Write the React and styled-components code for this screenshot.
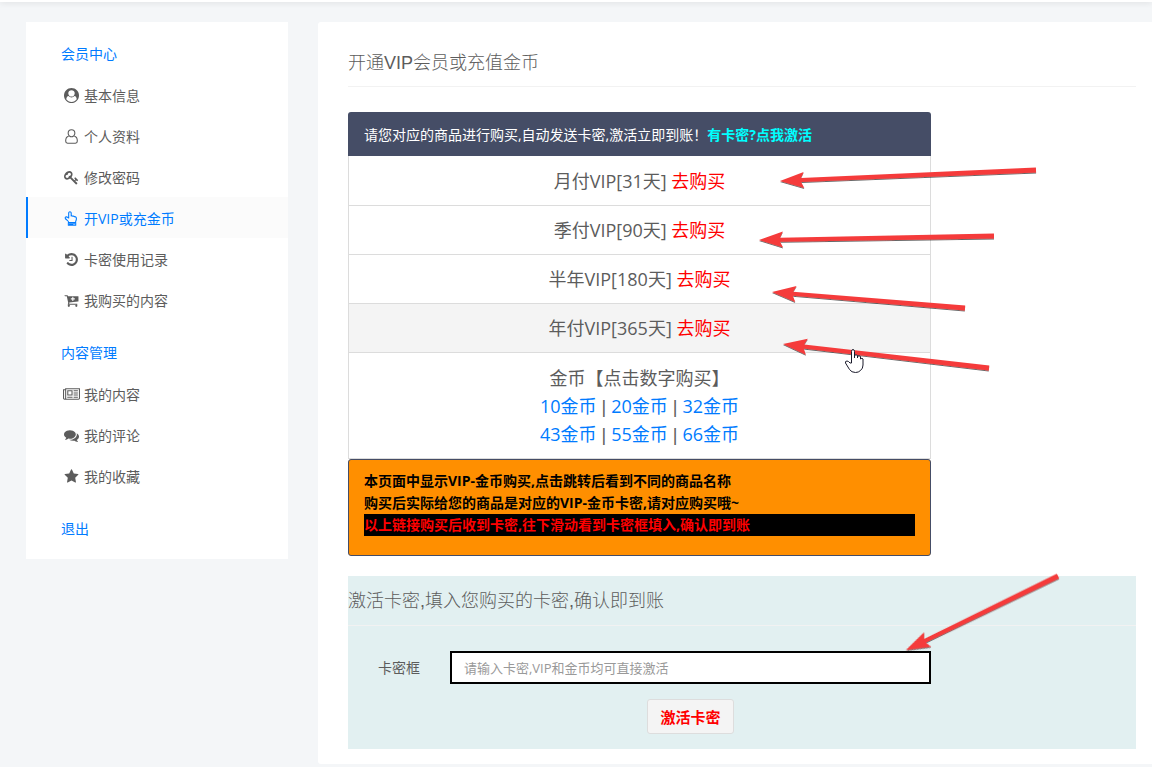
import React from "react";
import styled, { createGlobalStyle } from "styled-components";

//COLORS
const primaryBlue = "#007bff";
const textGray = "#5c5c5c";
const pageGray = "#f4f6f8";
const navy = "#454d66";
const arrowRed = "#f53b3b";

//FONTS
const bodyFont = `"Open Sans", "Noto Sans CJK SC", sans-serif`;
const titleFont = `"Liberation Sans", "Noto Sans CJK SC", sans-serif`;

//STYLING
const GlobalStyle = createGlobalStyle`
  * {
    box-sizing: border-box;
  }
  body {
    margin: 0;
    background: ${pageGray};
    color: ${textGray};
    font-family: ${bodyFont};
    font-size: 14px;
  }
  a {
    color: ${primaryBlue};
    text-decoration: none;
  }
`;

const Page = styled.div`
  position: relative;
  overflow: hidden;
`;

const TopBar = styled.header`
  height: 2px;
  background: #fff;
  box-shadow: 0 0 6px rgba(0, 0, 0, 0.2);
`;

const Layout = styled.div`
  display: flex;
  align-items: flex-start;
  gap: 30px;
  padding: 20px 0 3px 26px;
`;

const Sidebar = styled.nav`
  flex: 0 0 262px;
  padding-bottom: 10px;
  background: #fff;
`;

const MenuHeading = styled.a`
  display: block;
  margin-top: 11px;
  padding-left: 35px;
  line-height: 41px;
`;

const MenuList = styled.ul`
  margin: 0;
  padding: 0 0 1px;
  list-style: none;
`;

const MenuLink = styled.a`
  display: flex;
  align-items: center;
  gap: 3px;
  height: 41px;
  padding-left: 33px;
  border-left: 2px solid ${(props) => (props.$active ? primaryBlue : "transparent")};
  background: ${(props) => (props.$active ? "#fbfbfb" : "#fff")};
  && {
    color: ${(props) => (props.$active ? primaryBlue : textGray)};
  }
`;

const IconBox = styled.span`
  display: flex;
  justify-content: center;
  width: 20px;
  padding-top: 2px;
`;

const Main = styled.main`
  flex: 1;
  min-width: 0;
  padding: 29px 16px 15px 30px;
  border-radius: 3px 0 0 3px;
  background: #fff;
`;

const Title = styled.h1`
  margin: 0 0 25px;
  padding-bottom: 11px;
  border-bottom: 1px solid #f2f2f2;
  font: 300 18px/24px ${titleFont};
`;

const Card = styled.section`
  width: calc(75% - 8px);
`;

const CardHeader = styled.div`
  padding: 13px 16px 11px;
  border-radius: 3px 3px 0 0;
  background: ${navy};
  color: #fff;
  line-height: 20px;
`;

const ActivateLink = styled.a`
  && {
    color: #0ff;
    font-weight: 700;
  }
`;

const PlanList = styled.ul`
  margin: 0;
  padding: 1px 0 0;
  border: 1px solid #dcdcdc;
  border-top: 0;
  list-style: none;
  font-size: 18px;
  line-height: 28px;
  text-align: center;
`;

const Plan = styled.li`
  padding: 10px 0;
  border-bottom: 1px solid #dcdcdc;
  background: ${(props) => (props.$hovered ? "#f4f4f4" : "#fff")};
`;

const Coins = styled.li`
  padding: 11px 0 10px;
`;

const Separator = styled.span`
  font-family: ${titleFont};
  line-height: 1;
`;

const BuyLink = styled.a`
  && {
    color: #f00;
  }
`;

const Notice = styled.div`
  padding: 10px 15px 19px;
  border: 1px solid ${navy};
  border-radius: 3px;
  background: #ff8f00;
  color: #000;
  font-weight: 700;
  line-height: 22px;
`;

const Warning = styled.div`
  background: #000;
  color: #f00;
`;

const Panel = styled.section`
  margin-top: 20px;
  padding-bottom: 15px;
  background: #e2f0f1;
`;

const PanelTitle = styled.h2`
  margin: 0;
  padding: 13px 0 12px;
  border-bottom: 1px solid #f2f2f2;
  font: 300 18px/24px ${titleFont};
`;

const Form = styled.form`
  display: grid;
  grid-template-columns: 72px 1fr;
  row-gap: 15px;
  width: calc(75% - 8px);
  padding: 25px 0 0 30px;
`;

const Label = styled.label`
  align-self: end;
  line-height: 32px;
`;

const KeyInput = styled.input`
  width: 100%;
  height: 33px;
  padding: 0 12px;
  border: 2px solid #000;
  background: #fff;
  font: 13px ${bodyFont};
  &::placeholder {
    color: #999;
    opacity: 1;
  }
`;

const SubmitButton = styled.button`
  grid-column: 2;
  justify-self: center;
  height: 35px;
  padding: 0 12px;
  border: 1px solid #ddd;
  border-radius: 3px;
  background: #f4f4f4;
  color: #f00;
  font: 700 15px ${bodyFont};
`;

const Markup = styled.svg`
  position: absolute;
  top: 0;
  left: 0;
  pointer-events: none;
`;

//ICONS
const icons = {
  account: {
    d: "M1523 1339q-22-155-87.5-257.5t-184.5-118.5q-67 74-159.5 115.5t-195.5 41.5-195.5-41.5-159.5-115.5q-119 16-184.5 118.5t-87.5 257.5q106 150 271 237.5t356 87.5 356-87.5 271-237.5zm-243-699q0-159-112.5-271.5t-271.5-112.5-271.5 112.5-112.5 271.5 112.5 271.5 271.5 112.5 271.5-112.5 112.5-271.5zm512 256q0 182-71 347.5t-190.5 286-285.5 191.5-349 71-349-71-285.5-191.5-190.5-286-71-347.5 71-348 191-286 286-191 348-71 348 71 286 191 191 286 71 348z",
  },
  user: {
    stroke: true,
    d: "M896 80a400 420 0 0 1 400 420q0 200-150 330a390 340 0 0 1-500 0q-150-130-150-330a400 420 0 0 1 400-420zM560 860q-360 50-360 580q0 230 230 260h932q230-30 230-260q0-530-360-580",
  },
  key: {
    d: "M832 512q0-80-56-136t-136-56-136 56-56 136q0 42 19 83-41-19-83-19-80 0-136 56t-56 136 56 136 136 56 136-56 56-136q0-42-19-83 41 19 83 19 80 0 136-56t56-136zm851 704q0 17-49 66t-66 49q-9 0-28.5-16t-36.5-33-38.5-40-24.5-26l-96 96 220 220q28 28 28 68 0 42-39 81t-81 39q-40 0-68-28l-671-671q-176 131-365 131-163 0-265.5-102.5t-102.5-265.5q0-160 95-313t248-248 313-95q163 0 265.5 102.5t102.5 265.5q0 189-131 365l355 355 96-96q-3-3-26-24.5t-40-38.5-33-36.5-16-28.5q0-17 49-66t66-49q13 0 23 10 6 6 46 44.5t82 79.5 86.5 86 73 78 28.5 41z",
  },
  hand: {
    stroke: true,
    d: "M560 1380q-20-150-160-260q-210-150-250-260q-20-160 140-160q130 20 270 140V230q20-150 150-150t150 150v370q80-60 190 20q120-40 190 60q180-30 240 150q20 200-60 350q-40 90-40 200zM520 1380h880v320H520zM600 1520h720M600 1620h500",
  },
  history: {
    d: "M1664 896q0 156-61 298t-164 245-245 164-298 61q-172 0-327-72.5t-264-204.5q-7-10-6.5-22.5t8.5-20.5l137-138q10-9 25-9 16 2 23 12 73 95 179 147t225 52q104 0 198.5-40.5t163.5-109.5 109.5-163.5 40.5-198.5-40.5-198.5-109.5-163.5-163.5-109.5-198.5-40.5q-98 0-188 35.5t-160 101.5l137 138q31 30 14 69-17 40-59 40h-448q-26 0-45-19t-19-45v-448q0-42 40-59 39-17 69 14l130 129q107-101 244.5-156.5t284.5-55.5q156 0 298 61t245 164 164 245 61 298zm-640-288v448q0 14-9 23t-23 9h-320q-14 0-23-9t-9-23v-64q0-14 9-23t23-9h224v-352q0-14 9-23t23-9h64q14 0 23 9t9 23z",
  },
  cart: {
    d: "M704 1536q0 52-38 90t-90 38-90-38-38-90 38-90 90-38 90 38 38 90zm896 0q0 52-38 90t-90 38-90-38-38-90 38-90 90-38 90 38 38 90zm128-1088v512q0 24-16.5 42.5t-40.5 21.5l-1044 122q13 60 13 70 0 16-24 64h920q26 0 45 19t19 45-19 45-45 19h-1024q-26 0-45-19t-19-45q0-11 8-31.5t16-36 21.5-40 15.5-29.5l-177-823h-204q-26 0-45-19t-19-45 19-45 45-19h256q16 0 28.5 6.5t19.5 15.5 13 24.5 8 26 5.5 29.5 4.5 26h1201q26 0 45 19t19 45zM1312 704q0-26-19-45t-45-19h-128v-128q0-26-19-45t-45-19-45 19-19 45v128h-128q-26 0-45 19t-19 45 19 45 45 19h128v128q0 26 19 45t45 19 45-19 19-45v-128h128q26 0 45-19t19-45z",
  },
  news: {
    wide: true,
    d: "M1024 512h-384v384h384v-384zm128 640v128h-640v-128h640zm0-768v640h-640v-640h640zm640 768v128h-512v-128h512zm0-256v128h-512v-128h512zm0-256v128h-512v-128h512zm0-256v128h-512v-128h512zm-1536 960v-960h-128v960q0 26 19 45t45 19 45-19 19-45zm1664 0v-1088h-1536v1088q0 33-11 64h1483q26 0 45-19t19-45zm128-1216v1216q0 80-56 136t-136 56h-1664q-80 0-136-56t-56-136v-1088h256v-128h1792z",
  },
  comments: {
    d: "M1408 768q0 139-94 257t-256.5 186.5-353.5 68.5q-86 0-176-16-124 88-278 128-36 9-86 16h-3q-11 0-20.5-8t-11.5-21q-1-3-1-6.5t.5-6.5 2-6l2.5-5 3.5-5.5 4-5 4.5-5 4-4.5q5-6 23-25t26-29.5 22.5-29 25-38.5 20.5-44q-124-72-195-177t-71-224q0-139 94-257t256.5-186.5 353.5-68.5 353.5 68.5 256.5 186.5 94 257zm384 256q0 120-71 224.5t-195 176.5q10 24 20.5 44t25 38.5 22.5 29 26 29.5 23 25q1 1 4 4.5t4.5 5 4 5 3.5 5.5l2.5 5 2 6 .5 6.5-1 6.5q-3 14-13 22t-22 7q-50-7-86-16-154-40-278-128-90 16-176 16-271 0-472-132 58 4 88 4 161 0 309-45t264-129q125-92 192-212t67-254q0-77-23-152 129 71 204 178t75 230z",
  },
  star: {
    d: "M1728 647q0 22-26 48l-363 354 86 500q1 7 1 20 0 21-10.5 35.5t-30.5 14.5q-19 0-40-12l-449-236-449 236q-22 12-40 12-21 0-31.5-14.5t-10.5-35.5q0-6 2-20l86-500-364-354q-25-27-25-48 0-37 56-46l502-73 225-455q19-41 49-41t49 41l225 455 502 73q56 9 56 46z",
  },
};

const Icon = ({ name }) => {
  const { d, stroke, wide } = icons[name];
  return (
    <svg width={wide ? 17 : 15} height="15" viewBox={`0 0 ${wide ? 2048 : 1792} 1792`} aria-hidden="true">
      <path
        d={d}
        fill={stroke ? "none" : "currentColor"}
        fillRule="evenodd"
        stroke={stroke ? "currentColor" : "none"}
        strokeWidth="130"
        strokeLinejoin="round"
      />
    </svg>
  );
};

//DATA
const memberMenu = [
  { icon: "account", text: "基本信息" },
  { icon: "user", text: "个人资料" },
  { icon: "key", text: "修改密码" },
  { icon: "hand", text: "开VIP或充金币", active: true },
  { icon: "history", text: "卡密使用记录" },
  { icon: "cart", text: "我购买的内容" },
];

const contentMenu = [
  { icon: "news", text: "我的内容" },
  { icon: "comments", text: "我的评论" },
  { icon: "star", text: "我的收藏" },
];

const plans = [
  { name: "月付VIP[31天]" },
  { name: "季付VIP[90天]" },
  { name: "半年VIP[180天]" },
  { name: "年付VIP[365天]", hovered: true },
];

const coinRows = [
  [10, 20, 32],
  [43, 55, 66],
];

// tip and tail of each arrow
const arrows = [
  [780, 181, 1036, 170],
  [759, 240, 994, 236],
  [772, 292, 965, 308],
  [783, 344, 989, 368],
  [906, 650, 1058, 576],
];

const Menu = ({ items }) => (
  <MenuList>
    {items.map((item) => (
      <li key={item.text}>
        <MenuLink href="#" $active={item.active}>
          <IconBox>
            <Icon name={item.icon} />
          </IconBox>
          {item.text}
        </MenuLink>
      </li>
    ))}
  </MenuList>
);

const Arrow = ({ points: [x1, y1, x2, y2] }) => {
  const length = Math.hypot(x2 - x1, y2 - y1);
  const angle = (Math.atan2(y2 - y1, x2 - x1) * 180) / Math.PI;
  const d = `M0 0L24-8L21-2L${length}-2.5V2.5L21 2L24 8Z`;
  return <path d={d} fill={arrowRed} transform={`translate(${x1} ${y1}) rotate(${angle})`} />;
};

const Annotations = () => (
  <Markup width="1152" height="767" aria-hidden="true">
    <defs>
      <filter id="shadow" x="-10%" y="-10%" width="120%" height="120%">
        <feDropShadow dx="0" dy="1" stdDeviation="0.6" floodColor="#000" floodOpacity="0.6" />
      </filter>
    </defs>
    <g filter="url(#shadow)">
      {arrows.map((points) => (
        <Arrow key={points.join()} points={points} />
      ))}
    </g>
    <path
      d="M851.500 363V351.500q0-2 1.500-2t1.500 2V358v-2.500q1.500-1.500 3 0V358v-1.500q1.500-1.500 3 0V359q1.500-1.500 2.500 0v6q0 3.500-2.500 5.500q-2 2-5 2q-4 0-6-3l-4-6.500q-.5-2 1.500-2q1.500 0 3 2z"
      fill="#fff"
      stroke="#1a1a2b"
    />
  </Markup>
);

const App = () => (
  <Page>
    <GlobalStyle />
    <TopBar />
    <Layout>
      <Sidebar>
        <MenuHeading href="#">会员中心</MenuHeading>
        <Menu items={memberMenu} />
        <MenuHeading href="#">内容管理</MenuHeading>
        <Menu items={contentMenu} />
        <MenuHeading href="#">退出</MenuHeading>
      </Sidebar>
      <Main>
        <Title>开通VIP会员或充值金币</Title>
        <Card>
          <CardHeader>
            请您对应的商品进行购买,自动发送卡密,激活立即到账！
            <ActivateLink href="#key">有卡密?点我激活</ActivateLink>
          </CardHeader>
          <PlanList>
            {plans.map((plan) => (
              <Plan key={plan.name} $hovered={plan.hovered}>
                {plan.name} <BuyLink href="#">去购买</BuyLink>
              </Plan>
            ))}
            <Coins>
              <div>金币【点击数字购买】</div>
              {coinRows.map((row) => (
                <div key={row[0]}>
                  {row.map((count, index) => (
                    <React.Fragment key={count}>
                      {index > 0 && <Separator> | </Separator>}
                      <a href="#">{count}金币</a>
                    </React.Fragment>
                  ))}
                </div>
              ))}
            </Coins>
          </PlanList>
          <Notice>
            <div>本页面中显示VIP-金币购买,点击跳转后看到不同的商品名称</div>
            <div>购买后实际给您的商品是对应的VIP-金币卡密,请对应购买哦~</div>
            <Warning>以上链接购买后收到卡密,往下滑动看到卡密框填入,确认即到账</Warning>
          </Notice>
        </Card>
        <Panel>
          <PanelTitle>激活卡密,填入您购买的卡密,确认即到账</PanelTitle>
          <Form onSubmit={(e) => e.preventDefault()}>
            <Label htmlFor="key">卡密框</Label>
            <KeyInput id="key" type="text" placeholder="请输入卡密,VIP和金币均可直接激活" />
            <SubmitButton type="submit">激活卡密</SubmitButton>
          </Form>
        </Panel>
      </Main>
    </Layout>
    <Annotations />
  </Page>
);

export default App;
